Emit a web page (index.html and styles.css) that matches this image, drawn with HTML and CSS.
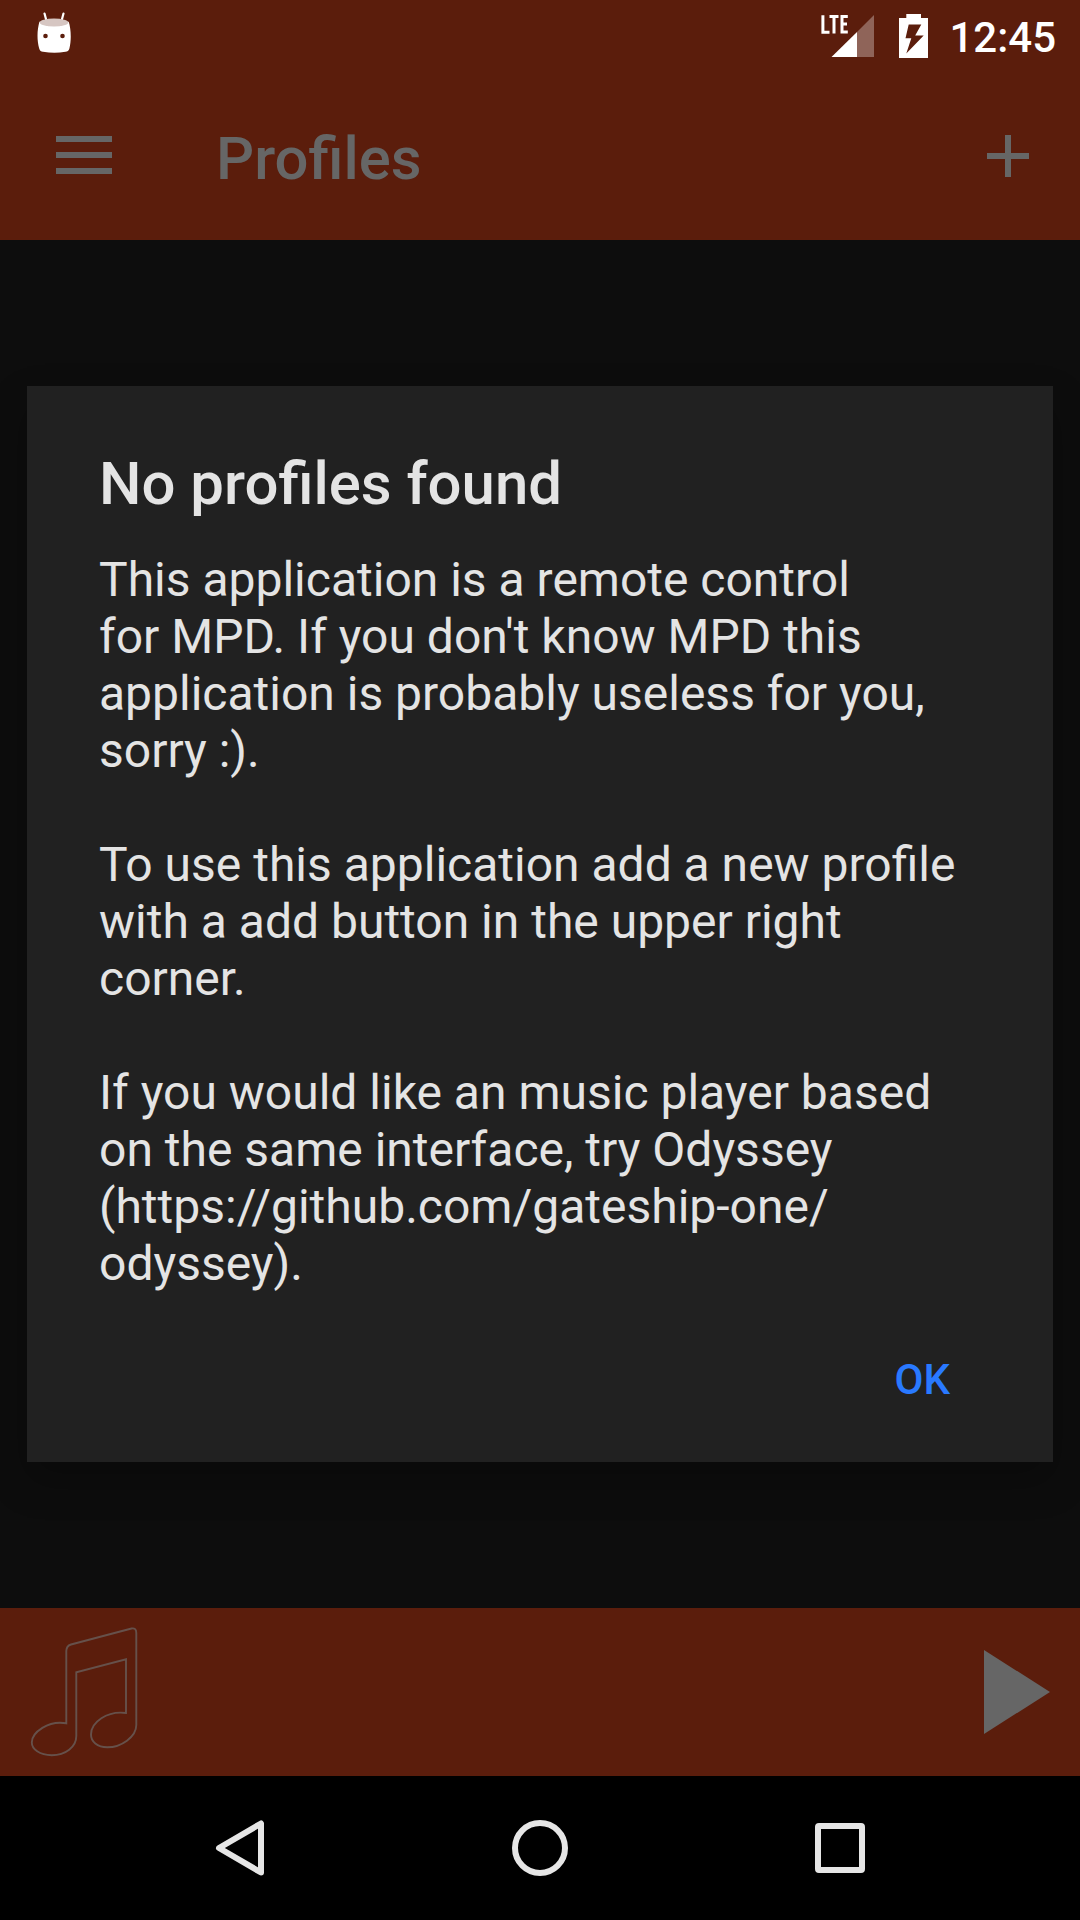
FILE: index.html
```html
<!DOCTYPE html>
<html lang="en">
<head>
<meta charset="utf-8">
<title>Profiles</title>
<link rel="stylesheet" href="styles.css">
</head>
<body>
<div class="screen">
  <header class="status-bar">
    <svg class="status-app" width="36" height="42" viewBox="0 0 36 42">
      <path d="M7.500 1.500l2 7.500M26.500 1.500l-2 7.500" stroke="#fff" stroke-width="2.200" stroke-linecap="round"/>
      <path fill="#fff" d="M2.500 9.500C8 14.500 27 14.500 31.700 9.500C34.200 18 34.400 28 32.400 36.500C31.700 39 30.500 39.300 28.500 39.700C21 41.200 14 41.200 6 39.700C4 39.300 2.900 39 2.200 36.500C-.2 28 0 18 2.500 9.500Z"/>
      <ellipse cx="17" cy="10.500" rx="14.400" ry="4" fill="#d6c6c2"/>
      <circle cx="8.500" cy="24" r="2.300" fill="#5b1d0c"/><circle cx="25.500" cy="24" r="2.300" fill="#5b1d0c"/>
    </svg>
    <div class="status-icons">
      <div class="signal">
        <svg width="54" height="43" viewBox="0 0 54 43">
          <path fill="#8f6459" d="M36 17L53 0V42H36Z"/>
          <path fill="#fff" d="M10.500 42L36 17V42Z"/>
          <path fill="none" stroke="#fff" stroke-width="3" d="M1.900 .3V17.200H8.500M8.500 1.500H17.500M13 1.500V18.500M26.800 1.500H21V17.100H26.800M21 9.100H26"/>
        </svg>
      </div>
      <svg class="battery" width="29" height="44" viewBox="0 0 29 44">
        <path fill="#fff" fill-rule="evenodd" d="M7.300 0H22V4H29V44H0V4H7.300ZM9.700 10.500L6.500 24.300H12.300L7.300 39.500L24.700 21.500H16.200L22.300 10.500Z"/>
      </svg>
      <span class="clock">12:45</span>
    </div>
  </header>
  <div class="toolbar">
    <svg width="56" height="38" viewBox="0 0 56 38"><path fill="#666" d="M0 0H56V6H0ZM0 16H56V22H0ZM0 32H56V38H0Z"/></svg>
    <h1 class="toolbar-title">Profiles</h1>
    <svg width="42" height="42" viewBox="0 0 42 42"><path fill="#666" d="M18 0H24V18H42V24H24V42H18V24H0V18H18Z"/></svg>
  </div>
  <main class="content">
    <section class="dialog">
      <h2 class="dialog-title">No profiles found</h2>
      <p class="dialog-message">This application is a remote control
for MPD. If you don't know MPD this
application is probably useless for you,
sorry :).

To use this application add a new profile
with a add button in the upper right
corner.

If you would like an music player based
on the same interface, try Odyssey
(https://github.com/gateship-one/
odyssey).</p>
      <button class="dialog-ok">OK</button>
    </section>
  </main>
  <div class="now-playing">
    <svg width="168" height="168" viewBox="0 0 168 168">
      <path fill="none" stroke="#66514b" stroke-width="1.900" d="M66.300 115.300V43Q66.300 38 71 36.500L131.500 20.500Q136.300 19.500 136.300 25V117C136.300 129 121 139.300 107.300 139.300C97 139.300 91 133.500 91 126.500C91 114.500 107 102.500 126 105V51.300L76.300 64.300V128C76.300 139 65.500 147.300 51.700 147.300C39.500 147.300 31.800 141 31.800 134.500C31.800 124.500 48.500 112 66.300 115.300Z"/>
    </svg>
    <svg class="play" width="66" height="84" viewBox="0 0 66 84"><path fill="#666" d="M0 0L66 42L0 84Z"/></svg>
  </div>
  <nav class="nav-bar">
    <svg width="56" height="56" viewBox="0 0 56 56"><path fill="none" stroke="#e6e6e6" stroke-width="6" stroke-linejoin="round" d="M49 3.500V52.500L7 28Z"/></svg>
    <svg width="56" height="56" viewBox="0 0 56 56"><circle cx="28" cy="28" r="25" fill="none" stroke="#e6e6e6" stroke-width="6"/></svg>
    <svg width="56" height="56" viewBox="0 0 56 56"><rect x="6" y="6" width="44" height="44" rx="1" fill="none" stroke="#e6e6e6" stroke-width="6"/></svg>
  </nav>
</div>
</body>
</html>
```
FILE: styles.css
```css
* { box-sizing: border-box; }
body { margin: 0; background: #000; font-family: Roboto, sans-serif; }
svg { display: block; flex: none; }
.screen { width: 1080px; height: 1920px; display: grid; grid-template-rows: 72px 168px 1368px 168px 144px; overflow: hidden; }
.status-bar { background: #5b1d0c; display: flex; justify-content: space-between; align-items: flex-start; padding: 12px 24px 0 37px; }
.status-icons { display: flex; align-items: flex-start; }
.signal { padding-top: 3px; }
.battery { margin: 2px 21px 0 24px; }
.clock { margin-top: 1px; color: #fff; font-size: 42px; font-weight: 500; line-height: 50px; }
.toolbar { background: #5b1d0c; display: flex; align-items: flex-start; padding: 63px 51px 0 56px; }
.toolbar svg:first-child { margin-top: 1px; }
.toolbar-title { flex: 1; margin: -11px 0 0 104px; color: #666; font-size: 59.800px; font-weight: 500; line-height: 70px; }
.content { background: #0d0d0d; display: flex; align-items: center; justify-content: center; }
.dialog { width: 1026px; height: 1076px; padding: 63px 72px 0; background: #212121; box-shadow: 0 18px 36px rgba(0, 0, 0, .25); display: flex; flex-direction: column; color: #e4e4e4; }
.dialog-title { margin: 0 0 32px; font-size: 59.900px; font-weight: 500; line-height: 70px; }
.dialog-message { margin: 0; font-size: 48px; line-height: 57px; white-space: pre; }
.dialog-ok { align-self: flex-end; margin: 63px 31px 0 0; padding: 0; border: 0; background: none; color: #2979ff; font: 500 42px/50px Roboto, sans-serif; }
.now-playing { background: #5b1d0c; display: flex; align-items: center; justify-content: space-between; padding-right: 30px; }
.nav-bar { background: #000; display: flex; align-items: center; justify-content: center; gap: 244px; }
```
